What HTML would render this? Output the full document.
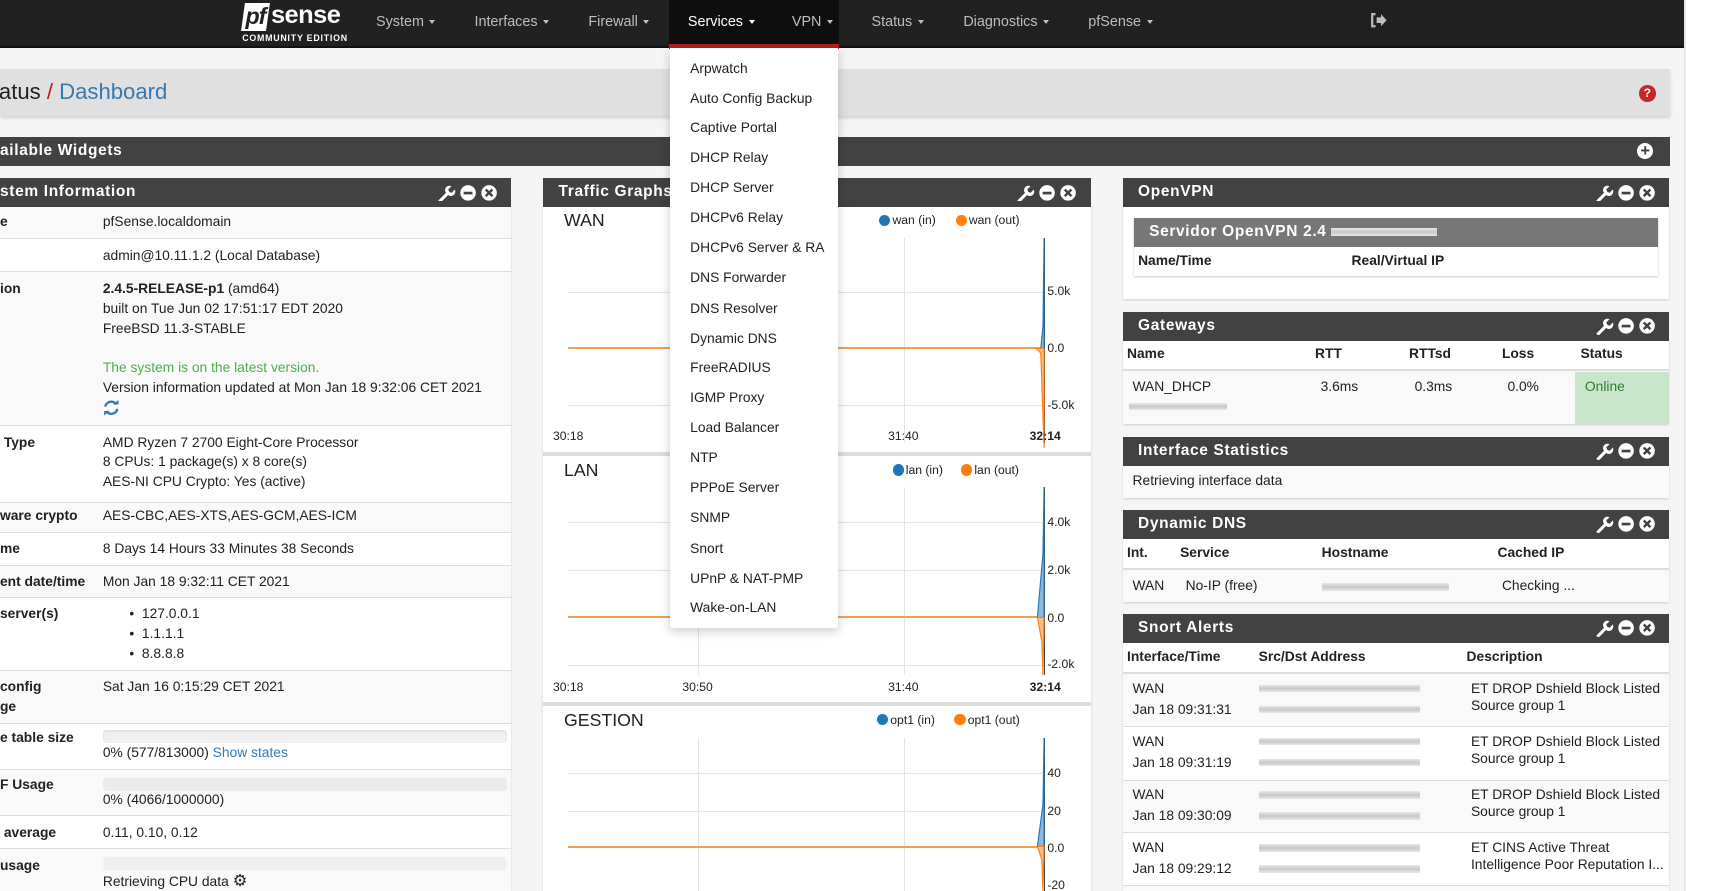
<!DOCTYPE html>
<html><head><meta charset="utf-8"><style>
*{margin:0;padding:0;box-sizing:border-box}
html,body{width:1733px;height:891px;overflow:hidden;background:#fff;font-family:"Liberation Sans",sans-serif;color:#212121}
#w{zoom:1.106;position:relative;width:1567px;height:806px;overflow:hidden;background:#fff}
.a{position:absolute;white-space:nowrap}
.t{position:absolute;white-space:nowrap;font-size:12.5px;line-height:16px}
.b{font-weight:bold}
.nav{position:absolute;left:0;top:0;width:1523px;height:43px;background:#212121;border-bottom:2px solid #111}
.ni{position:absolute;top:13px;color:#bdbdbd;font-size:13px}
.car{display:inline-block;border-left:3.5px solid transparent;border-right:3.5px solid transparent;border-top:4px solid #bdbdbd;vertical-align:2px;margin-left:5px}
.ph{position:absolute;height:26px;background:#424242;color:#fff;font-weight:bold;font-size:14px;letter-spacing:.6px;line-height:26px;padding-left:14px}
.ic{position:absolute;right:10px;top:5px}
.row{position:absolute;left:0;width:462px;border-bottom:1px solid #ddd}
.grid{position:absolute;height:1px;background:#e4e4e4}
.vg{position:absolute;width:1px;background:#e4e4e4}
.ax{position:absolute;font-size:11px;color:#212121}
.lg{position:absolute;font-size:11px}
.dot{display:inline-block;width:10px;height:10px;border-radius:50%;vertical-align:-1px;margin-right:2px}
.blur{position:absolute;height:7px;background:linear-gradient(#e8e8e8,#c8c8c8,#e8e8e8)}
.dd{position:absolute;left:624px;font-size:12.5px;color:#212121}
</style></head><body><div id="w">
<div class="a" style="left:0;top:43px;width:1523px;height:763px;background:#f5f5f5"></div>
<div class="a" style="left:1523px;top:0;width:1px;height:806px;background:#e8e8e8"></div>
<!-- navbar -->
<div class="nav"></div>
<div class="a" style="left:220px;top:3px;width:23px;height:25px;background:#fff;transform:skewX(-8deg)"></div>
<div class="a" style="left:222px;top:3px;font-size:21px;font-weight:bold;font-style:italic;color:#212121;letter-spacing:-1px">pf</div>
<div class="a" style="left:245px;top:1px;font-size:23px;font-weight:bold;color:#fff;letter-spacing:-.5px">sense</div>
<div class="a" style="left:219px;top:30px;font-size:8px;font-weight:bold;color:#fff;letter-spacing:.7px">COMMUNITY EDITION</div>
<div class="ni" style="left:340px">System<span class="car"></span></div>
<div class="ni" style="left:429px">Interfaces<span class="car"></span></div>
<div class="ni" style="left:532px">Firewall<span class="car"></span></div>
<div class="a" style="left:605px;top:0;width:154px;height:40px;background:#0e0e0e"></div>
<div class="a" style="left:605px;top:40px;width:154px;height:4px;background:#b71c1c"></div>
<div class="ni" style="left:622px;color:#fff">Services<span class="car" style="border-top-color:#fff"></span></div>
<div class="ni" style="left:716px">VPN<span class="car"></span></div>
<div class="ni" style="left:788px">Status<span class="car"></span></div>
<div class="ni" style="left:871px">Diagnostics<span class="car"></span></div>
<div class="ni" style="left:984px">pfSense<span class="car"></span></div>
<svg class="a" style="left:1239px;top:12px" width="15" height="13" viewBox="0 0 15 13"><path d="M5 1H2v11h3" fill="none" stroke="#bdbdbd" stroke-width="2"/><path d="M6 4h4V1l5 5.5-5 5.5V9H6z" fill="#bdbdbd"/></svg>
<!-- breadcrumb -->
<div class="a" style="left:0;top:62px;width:1510px;height:43px;background:#e0e0e0;box-shadow:0 2px 3px rgba(0,0,0,.15)"></div>
<div class="a" style="left:-1px;top:71px;font-size:20px;color:#212121">atus<span style="color:#b71c1c"> / </span><span style="color:#337ab7">Dashboard</span></div>
<div class="a" style="left:1482px;top:77px;width:15px;height:15px;border-radius:50%;background:#c62828;color:#fff;font-size:11px;font-weight:bold;text-align:center;line-height:15px">?</div>
<!-- available widgets -->
<div class="ph" style="left:0;top:124px;width:1510px;padding-left:0">ailable Widgets</div>
<div class="a" style="left:1480px;top:129px;width:15px;height:15px;border-radius:50%;background:#fff;color:#424242;font-size:15px;font-weight:bold;text-align:center;line-height:15px">+</div>

<!-- LEFT PANEL -->
<div class="a" style="left:0;top:186px;width:462px;height:620px;background:#fff;box-shadow:0 1px 2px rgba(0,0,0,.15)"></div>
<div class="ph" style="left:0;top:161px;width:462px;padding-left:0">stem Information<svg class="ic" width="58" height="16" viewBox="0 0 58 16"><g fill="#fff"><path d="M2 15l7-7a4 4 0 0 1 5-6l-3 3 1 2 2 1 3-3a4 4 0 0 1-6 5l-7 7z"/><circle cx="29" cy="8" r="7"/><circle cx="48" cy="8" r="7"/></g><rect x="25" y="7" width="8" height="2.4" fill="#424242"/><path d="M45 5l6 6M51 5l-6 6" stroke="#424242" stroke-width="2.2"/></svg></div>
<div class="row" style="top:187px;height:29px;background:#f9f9f9"></div>
<div class="row" style="top:216px;height:30px"></div>
<div class="row" style="top:246px;height:139px;background:#f9f9f9"></div>
<div class="row" style="top:385px;height:70px"></div>
<div class="row" style="top:455px;height:27px;background:#f9f9f9"></div>
<div class="row" style="top:482px;height:30px"></div>
<div class="row" style="top:512px;height:29px;background:#f9f9f9"></div>
<div class="row" style="top:541px;height:66px"></div>
<div class="row" style="top:607px;height:48px;background:#f9f9f9"></div>
<div class="row" style="top:655px;height:41px"></div>
<div class="row" style="top:696px;height:42px;background:#f9f9f9"></div>
<div class="row" style="top:738px;height:30px"></div>
<div class="row" style="top:768px;height:40px;background:#f9f9f9"></div>
<div class="t b" style="left:0;top:193px">e</div><div class="t" style="left:93px;top:193px">pfSense.localdomain</div>
<div class="t" style="left:93px;top:223px">admin@10.11.1.2 (Local Database)</div>
<div class="t b" style="left:0;top:253px">ion</div>
<div class="t" style="left:93px;top:253px"><b>2.4.5-RELEASE-p1</b> (amd64)</div>
<div class="t" style="left:93px;top:271px">built on Tue Jun 02 17:51:17 EDT 2020</div>
<div class="t" style="left:93px;top:289px">FreeBSD 11.3-STABLE</div>
<div class="t" style="left:93px;top:325px;color:#4caf50">The system is on the latest version.</div>
<div class="t" style="left:93px;top:343px">Version information updated at Mon Jan 18 9:32:06 CET 2021</div>
<svg class="a" style="left:93px;top:362px" width="15" height="14" viewBox="0 0 15 14"><path d="M2 6a5.5 5.5 0 0 1 10-2M13 8a5.5 5.5 0 0 1-10 2" fill="none" stroke="#337ab7" stroke-width="2.2"/><path d="M9 4h5V0zM6 10H1v4z" fill="#337ab7"/></svg>
<div class="t b" style="left:0;top:392px">&nbsp;Type</div>
<div class="t" style="left:93px;top:392px">AMD Ryzen 7 2700 Eight-Core Processor</div>
<div class="t" style="left:93px;top:410px">8 CPUs: 1 package(s) x 8 core(s)</div>
<div class="t" style="left:93px;top:428px">AES-NI CPU Crypto: Yes (active)</div>
<div class="t b" style="left:0;top:458px">ware crypto</div><div class="t" style="left:93px;top:458px">AES-CBC,AES-XTS,AES-GCM,AES-ICM</div>
<div class="t b" style="left:0;top:488px">me</div><div class="t" style="left:93px;top:488px">8 Days 14 Hours 33 Minutes 38 Seconds</div>
<div class="t b" style="left:0;top:518px">ent date/time</div><div class="t" style="left:93px;top:518px">Mon Jan 18 9:32:11 CET 2021</div>
<div class="t b" style="left:0;top:547px">server(s)</div>
<div class="t" style="left:117px;top:547px">•&nbsp; 127.0.0.1</div>
<div class="t" style="left:117px;top:565px">•&nbsp; 1.1.1.1</div>
<div class="t" style="left:117px;top:583px">•&nbsp; 8.8.8.8</div>
<div class="t b" style="left:0;top:613px">config</div><div class="t b" style="left:0;top:631px">ge</div>
<div class="t" style="left:93px;top:613px">Sat Jan 16 0:15:29 CET 2021</div>
<div class="t b" style="left:0;top:659px">e table size</div>
<div class="a" style="left:93px;top:660px;width:365px;height:12px;border-radius:3px;background:#f0f0f0;box-shadow:inset 0 1px 2px rgba(0,0,0,.08)"></div>
<div class="t" style="left:93px;top:673px">0% (577/813000) <span style="color:#337ab7">Show states</span></div>
<div class="t b" style="left:0;top:702px">F Usage</div>
<div class="a" style="left:93px;top:703px;width:365px;height:12px;border-radius:3px;background:#ececec"></div>
<div class="t" style="left:93px;top:715px">0% (4066/1000000)</div>
<div class="t b" style="left:0;top:745px">&nbsp;average</div><div class="t" style="left:93px;top:745px">0.11, 0.10, 0.12</div>
<div class="t b" style="left:0;top:775px">usage</div>
<div class="a" style="left:93px;top:775px;width:365px;height:12px;border-radius:3px;background:#f0f0f0"></div>
<div class="t" style="left:93px;top:788px">Retrieving CPU data <span style="font-size:15px">⚙</span></div>

<!-- MIDDLE PANEL -->
<div class="a" style="left:491px;top:186px;width:495px;height:620px;background:#fff;box-shadow:0 1px 2px rgba(0,0,0,.15)"></div>
<div class="ph" style="left:491px;top:161px;width:495px">Traffic Graphs<svg class="ic" width="58" height="16" viewBox="0 0 58 16"><g fill="#fff"><path d="M2 15l7-7a4 4 0 0 1 5-6l-3 3 1 2 2 1 3-3a4 4 0 0 1-6 5l-7 7z"/><circle cx="29" cy="8" r="7"/><circle cx="48" cy="8" r="7"/></g><rect x="25" y="7" width="8" height="2.4" fill="#424242"/><path d="M45 5l6 6M51 5l-6 6" stroke="#424242" stroke-width="2.2"/></svg></div>
<div class="a" style="left:491px;top:409px;width:495px;height:3px;background:#ddd"></div>
<div class="a" style="left:491px;top:635px;width:495px;height:3px;background:#ddd"></div>
<!-- WAN -->
<div class="a" style="left:510px;top:190px;font-size:16px">WAN</div>
<div class="lg" style="left:795px;top:193px"><span class="dot" style="background:#1f77b4"></span>wan (in)</div>
<div class="lg" style="left:864px;top:193px"><span class="dot" style="background:#ff7f0e"></span>wan (out)</div>
<div class="grid" style="left:514px;top:264px;width:430px"></div>
<div class="grid" style="left:514px;top:366px;width:430px"></div>
<div class="vg" style="left:817px;top:215px;height:186px"></div>
<div class="a" style="left:514px;top:314px;width:430px;height:2px;background:#f0a050"></div>
<div class="a" style="left:944px;top:215px;width:1px;height:186px;background:#444"></div>
<svg class="a" style="left:934px;top:215px" width="12" height="190"><path d="M10 0L9 80L7 100L3 100L10 100Z" fill="#8db7db" stroke="#1f77b4"/><path d="M3 100L7 104L10 190L10 100Z" fill="#ffbb80" stroke="#ff7f0e"/></svg>
<div class="ax" style="left:947px;top:257px">5.0k</div><div class="ax" style="left:947px;top:308px">0.0</div><div class="ax" style="left:947px;top:360px">-5.0k</div>
<div class="ax" style="left:500px;top:388px">30:18</div><div class="ax" style="left:803px;top:388px">31:40</div><div class="ax b" style="left:931px;top:388px">32:14</div>
<!-- LAN -->
<div class="a" style="left:510px;top:416px;font-size:16px">LAN</div>
<div class="lg" style="left:807px;top:419px"><span class="dot" style="background:#1f77b4"></span>lan (in)</div>
<div class="lg" style="left:869px;top:419px"><span class="dot" style="background:#ff7f0e"></span>lan (out)</div>
<div class="grid" style="left:514px;top:472px;width:430px"></div>
<div class="grid" style="left:514px;top:515px;width:430px"></div>
<div class="grid" style="left:514px;top:601px;width:430px"></div>
<div class="vg" style="left:631px;top:440px;height:170px"></div>
<div class="vg" style="left:817px;top:440px;height:170px"></div>
<div class="a" style="left:514px;top:557px;width:430px;height:2px;background:#f0a050"></div>
<div class="a" style="left:944px;top:440px;width:1px;height:170px;background:#444"></div>
<svg class="a" style="left:934px;top:440px" width="12" height="172"><path d="M10 0L9 60L4 118L10 118Z" fill="#8db7db" stroke="#1f77b4"/><path d="M4 118L8 140L9 170L10 118Z" fill="#ffbb80" stroke="#ff7f0e"/></svg>
<div class="ax" style="left:947px;top:466px">4.0k</div><div class="ax" style="left:947px;top:509px">2.0k</div><div class="ax" style="left:947px;top:552px">0.0</div><div class="ax" style="left:947px;top:594px">-2.0k</div>
<div class="ax" style="left:500px;top:615px">30:18</div><div class="ax" style="left:617px;top:615px">30:50</div><div class="ax" style="left:803px;top:615px">31:40</div><div class="ax b" style="left:931px;top:615px">32:14</div>
<!-- GESTION -->
<div class="a" style="left:510px;top:642px;font-size:16px">GESTION</div>
<div class="lg" style="left:793px;top:645px"><span class="dot" style="background:#1f77b4"></span>opt1 (in)</div>
<div class="lg" style="left:863px;top:645px"><span class="dot" style="background:#ff7f0e"></span>opt1 (out)</div>
<div class="grid" style="left:514px;top:699px;width:430px"></div>
<div class="grid" style="left:514px;top:733px;width:430px"></div>
<div class="vg" style="left:631px;top:667px;height:140px"></div>
<div class="vg" style="left:817px;top:667px;height:140px"></div>
<div class="a" style="left:514px;top:765px;width:430px;height:2px;background:#f0a050"></div>
<div class="a" style="left:944px;top:667px;width:1px;height:140px;background:#444"></div>
<svg class="a" style="left:934px;top:667px" width="12" height="140"><path d="M10 0L9 60L4 98L10 98Z" fill="#8db7db" stroke="#1f77b4"/><path d="M4 98L8 110L9 140L10 98Z" fill="#ffbb80" stroke="#ff7f0e"/></svg>
<div class="ax" style="left:947px;top:693px">40</div><div class="ax" style="left:947px;top:727px">20</div><div class="ax" style="left:947px;top:760px">0.0</div><div class="ax" style="left:947px;top:794px">-20</div>

<!-- RIGHT -->
<div class="a" style="left:1015px;top:186px;width:494px;height:84px;background:#fff;box-shadow:0 1px 2px rgba(0,0,0,.15)"></div>
<div class="ph" style="left:1015px;top:161px;width:494px">OpenVPN<svg class="ic" width="58" height="16" viewBox="0 0 58 16"><g fill="#fff"><path d="M2 15l7-7a4 4 0 0 1 5-6l-3 3 1 2 2 1 3-3a4 4 0 0 1-6 5l-7 7z"/><circle cx="29" cy="8" r="7"/><circle cx="48" cy="8" r="7"/></g><rect x="25" y="7" width="8" height="2.4" fill="#424242"/><path d="M45 5l6 6M51 5l-6 6" stroke="#424242" stroke-width="2.2"/></svg></div>
<div class="a" style="left:1025px;top:197px;width:474px;height:53px;background:#fff;box-shadow:0 1px 2px rgba(0,0,0,.2)"></div>
<div class="ph" style="left:1025px;top:197px;width:474px;background:#777">Servidor OpenVPN 2.4</div>
<div class="blur" style="left:1203px;top:206px;width:96px"></div>
<div class="t b" style="left:1029px;top:228px">Name/Time</div><div class="t b" style="left:1222px;top:228px">Real/Virtual IP</div>

<div class="a" style="left:1015px;top:307px;width:494px;height:76px;background:#fff;box-shadow:0 1px 2px rgba(0,0,0,.15)"></div>
<div class="ph" style="left:1015px;top:282px;width:494px">Gateways<svg class="ic" width="58" height="16" viewBox="0 0 58 16"><g fill="#fff"><path d="M2 15l7-7a4 4 0 0 1 5-6l-3 3 1 2 2 1 3-3a4 4 0 0 1-6 5l-7 7z"/><circle cx="29" cy="8" r="7"/><circle cx="48" cy="8" r="7"/></g><rect x="25" y="7" width="8" height="2.4" fill="#424242"/><path d="M45 5l6 6M51 5l-6 6" stroke="#424242" stroke-width="2.2"/></svg></div>
<div class="a" style="left:1015px;top:334px;width:494px;height:49px;background:#f9f9f9;border-top:2px solid #ddd"></div>
<div class="a" style="left:1424px;top:336px;width:85px;height:47px;background:#c8e6c9"></div>
<div class="t b" style="left:1019px;top:312px">Name</div><div class="t b" style="left:1189px;top:312px">RTT</div><div class="t b" style="left:1274px;top:312px">RTTsd</div><div class="t b" style="left:1358px;top:312px">Loss</div><div class="t b" style="left:1429px;top:312px">Status</div>
<div class="t" style="left:1024px;top:342px">WAN_DHCP</div><div class="t" style="left:1194px;top:342px">3.6ms</div><div class="t" style="left:1279px;top:342px">0.3ms</div><div class="t" style="left:1363px;top:342px">0.0%</div><div class="t" style="left:1433px;top:342px;color:#2e7d32">Online</div>
<div class="blur" style="left:1021px;top:364px;width:88px"></div>

<div class="a" style="left:1015px;top:420px;width:494px;height:30px;background:#f9f9f9;box-shadow:0 1px 2px rgba(0,0,0,.15)"></div>
<div class="ph" style="left:1015px;top:395px;width:494px">Interface Statistics<svg class="ic" width="58" height="16" viewBox="0 0 58 16"><g fill="#fff"><path d="M2 15l7-7a4 4 0 0 1 5-6l-3 3 1 2 2 1 3-3a4 4 0 0 1-6 5l-7 7z"/><circle cx="29" cy="8" r="7"/><circle cx="48" cy="8" r="7"/></g><rect x="25" y="7" width="8" height="2.4" fill="#424242"/><path d="M45 5l6 6M51 5l-6 6" stroke="#424242" stroke-width="2.2"/></svg></div>
<div class="t" style="left:1024px;top:427px">Retrieving interface data</div>

<div class="a" style="left:1015px;top:486px;width:494px;height:58px;background:#fff;box-shadow:0 1px 2px rgba(0,0,0,.15)"></div>
<div class="ph" style="left:1015px;top:461px;width:494px">Dynamic DNS<svg class="ic" width="58" height="16" viewBox="0 0 58 16"><g fill="#fff"><path d="M2 15l7-7a4 4 0 0 1 5-6l-3 3 1 2 2 1 3-3a4 4 0 0 1-6 5l-7 7z"/><circle cx="29" cy="8" r="7"/><circle cx="48" cy="8" r="7"/></g><rect x="25" y="7" width="8" height="2.4" fill="#424242"/><path d="M45 5l6 6M51 5l-6 6" stroke="#424242" stroke-width="2.2"/></svg></div>
<div class="a" style="left:1015px;top:514px;width:494px;height:30px;background:#f9f9f9;border-top:2px solid #ddd"></div>
<div class="t b" style="left:1019px;top:492px">Int.</div><div class="t b" style="left:1067px;top:492px">Service</div><div class="t b" style="left:1195px;top:492px">Hostname</div><div class="t b" style="left:1354px;top:492px">Cached IP</div>
<div class="t" style="left:1024px;top:522px">WAN</div><div class="t" style="left:1072px;top:522px">No-IP (free)</div><div class="t" style="left:1358px;top:522px">Checking ...</div>
<div class="blur" style="left:1195px;top:527px;width:115px"></div>

<div class="a" style="left:1015px;top:580px;width:494px;height:226px;background:#fff;box-shadow:0 1px 2px rgba(0,0,0,.15)"></div>
<div class="ph" style="left:1015px;top:555px;width:494px">Snort Alerts<svg class="ic" width="58" height="16" viewBox="0 0 58 16"><g fill="#fff"><path d="M2 15l7-7a4 4 0 0 1 5-6l-3 3 1 2 2 1 3-3a4 4 0 0 1-6 5l-7 7z"/><circle cx="29" cy="8" r="7"/><circle cx="48" cy="8" r="7"/></g><rect x="25" y="7" width="8" height="2.4" fill="#424242"/><path d="M45 5l6 6M51 5l-6 6" stroke="#424242" stroke-width="2.2"/></svg></div>
<div class="t b" style="left:1019px;top:586px">Interface/Time</div><div class="t b" style="left:1138px;top:586px">Src/Dst Address</div><div class="t b" style="left:1326px;top:586px">Description</div>
<div class="a" style="left:1015px;top:608px;width:494px;height:49px;background:#f9f9f9;border-top:2px solid #ddd;border-bottom:1px solid #ddd"></div>
<div class="a" style="left:1015px;top:705px;width:494px;height:48px;background:#f9f9f9;border-top:1px solid #ddd;border-bottom:1px solid #ddd"></div>
<div class="a" style="left:1015px;top:800px;width:494px;height:6px;background:#f9f9f9;border-top:1px solid #ddd"></div>
<div class="t" style="left:1024px;top:615px">WAN</div><div class="t" style="left:1024px;top:634px">Jan 18 09:31:31</div>
<div class="t" style="left:1330px;top:615px">ET DROP Dshield Block Listed</div><div class="t" style="left:1330px;top:630px">Source group 1</div>
<div class="blur" style="left:1138px;top:619px;width:146px"></div><div class="blur" style="left:1138px;top:638px;width:146px"></div>
<div class="t" style="left:1024px;top:663px">WAN</div><div class="t" style="left:1024px;top:682px">Jan 18 09:31:19</div>
<div class="t" style="left:1330px;top:663px">ET DROP Dshield Block Listed</div><div class="t" style="left:1330px;top:678px">Source group 1</div>
<div class="blur" style="left:1138px;top:667px;width:146px"></div><div class="blur" style="left:1138px;top:686px;width:146px"></div>
<div class="t" style="left:1024px;top:711px">WAN</div><div class="t" style="left:1024px;top:730px">Jan 18 09:30:09</div>
<div class="t" style="left:1330px;top:711px">ET DROP Dshield Block Listed</div><div class="t" style="left:1330px;top:726px">Source group 1</div>
<div class="blur" style="left:1138px;top:715px;width:146px"></div><div class="blur" style="left:1138px;top:734px;width:146px"></div>
<div class="t" style="left:1024px;top:759px">WAN</div><div class="t" style="left:1024px;top:778px">Jan 18 09:29:12</div>
<div class="t" style="left:1330px;top:759px">ET CINS Active Threat</div><div class="t" style="left:1330px;top:774px">Intelligence Poor Reputation I...</div>
<div class="blur" style="left:1138px;top:763px;width:146px"></div><div class="blur" style="left:1138px;top:782px;width:146px"></div>

<!-- DROPDOWN -->
<div class="a" style="left:606px;top:43px;width:152px;height:525px;background:#fff;border-radius:0 0 3px 3px;box-shadow:0 3px 10px rgba(0,0,0,.2)"></div>
<div class="dd" style="top:54px">Arpwatch</div>
<div class="dd" style="top:81px">Auto Config Backup</div>
<div class="dd" style="top:108px">Captive Portal</div>
<div class="dd" style="top:135px">DHCP Relay</div>
<div class="dd" style="top:162px">DHCP Server</div>
<div class="dd" style="top:189px">DHCPv6 Relay</div>
<div class="dd" style="top:216px">DHCPv6 Server &amp; RA</div>
<div class="dd" style="top:243px">DNS Forwarder</div>
<div class="dd" style="top:271px">DNS Resolver</div>
<div class="dd" style="top:298px">Dynamic DNS</div>
<div class="dd" style="top:325px">FreeRADIUS</div>
<div class="dd" style="top:352px">IGMP Proxy</div>
<div class="dd" style="top:379px">Load Balancer</div>
<div class="dd" style="top:406px">NTP</div>
<div class="dd" style="top:433px">PPPoE Server</div>
<div class="dd" style="top:460px">SNMP</div>
<div class="dd" style="top:488px">Snort</div>
<div class="dd" style="top:515px">UPnP &amp; NAT-PMP</div>
<div class="dd" style="top:542px">Wake-on-LAN</div>
</div></body></html>
